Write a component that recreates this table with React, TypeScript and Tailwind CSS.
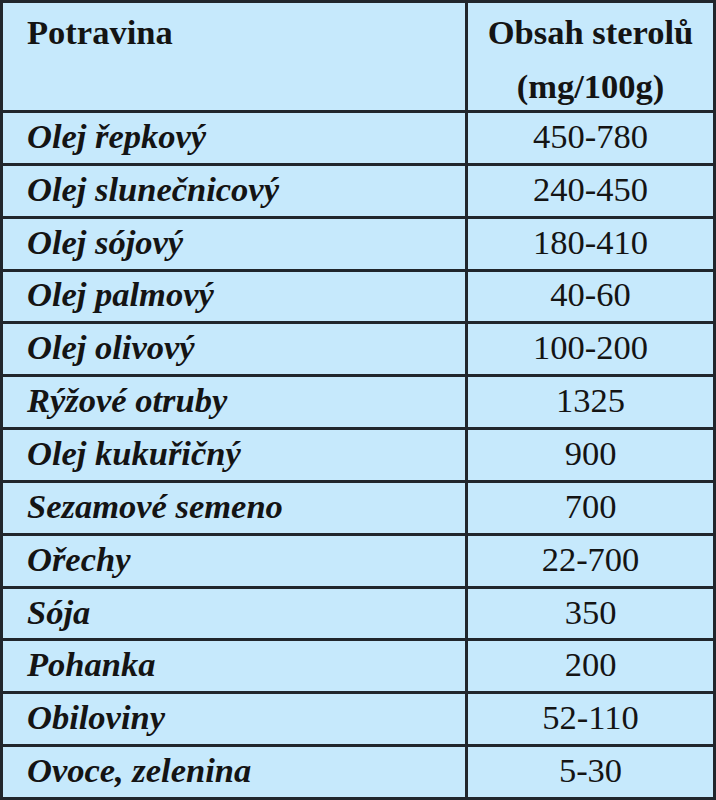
import React from "react";

const rows: [string, string][] = [
  ["Olej řepkový", "450-780"],
  ["Olej slunečnicový", "240-450"],
  ["Olej sójový", "180-410"],
  ["Olej palmový", "40-60"],
  ["Olej olivový", "100-200"],
  ["Rýžové otruby", "1325"],
  ["Olej kukuřičný", "900"],
  ["Sezamové semeno", "700"],
  ["Ořechy", "22-700"],
  ["Sója", "350"],
  ["Pohanka", "200"],
  ["Obiloviny", "52-110"],
  ["Ovoce, zelenina", "5-30"],
];

export default function App() {
  return (
    <div className="w-[716px] h-[800px] overflow-hidden border-[3px] border-[#20262c] bg-[#c6e9fc] flex flex-col font-['Liberation_Serif',serif] text-[#141414] text-[34.5px]">
      <div className="h-[107px] grid grid-cols-[465px_1fr] shrink-0">
        <div className="border-r-[3px] border-[#20262c] pl-[24px] pt-[2px] leading-[54px] font-bold">
          Potravina
        </div>
        <div className="pt-[2px] leading-[54px] font-bold text-center">
          <div>Obsah sterolů</div>
          <div>(mg/100g)</div>
        </div>
      </div>
      {rows.map(([name, val]) => (
        <div
          key={name}
          className="flex-1 min-h-0 grid grid-cols-[465px_1fr] border-t-[3px] border-[#20262c] leading-[40px]"
        >
          <div className="border-r-[3px] border-[#20262c] pl-[24px] pb-[4px] flex items-center font-bold italic">
            {name}
          </div>
          <div className="flex items-center justify-center pb-[4px]">{val}</div>
        </div>
      ))}
    </div>
  );
}
